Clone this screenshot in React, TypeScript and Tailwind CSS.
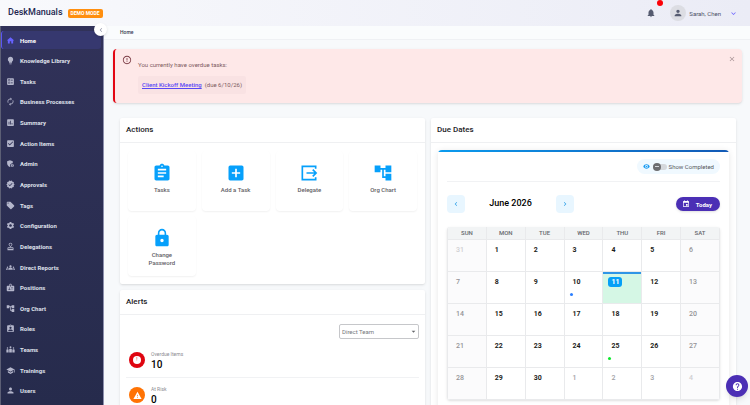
import React, { useState } from 'react'
import {
  MdAccountTree,
  MdAddBox,
  MdAdminPanelSettings,
  MdArrowDropDown,
  MdAssessment,
  MdAssignment,
  MdAssignmentInd,
  MdAutorenew,
  MdBadge,
  MdBallot,
  MdCheckBox,
  MdChevronLeft,
  MdChevronRight,
  MdClose,
  MdErrorOutline,
  MdEvent,
  MdGroups,
  MdHelp,
  MdHome,
  MdKeyboardArrowDown,
  MdLightbulb,
  MdLocalOffer,
  MdLock,
  MdNotifications,
  MdOutlineApproval,
  MdPerson,
  MdRemoveRedEye,
  MdSchool,
  MdSettings,
  MdVerified,
  MdWarning,
} from 'react-icons/md'

type Icon = React.ComponentType<{ className?: string }>

function DelegateIcon({ className }: { className?: string }) {
  return (
    <svg viewBox="0 0 24 24" fill="none" stroke="currentColor" strokeWidth="2" className={className}>
      <path d="M20 7V4H4v16h16v-3" />
      <path d="M9 12h11M16.500 8l4 4-4 4" />
    </svg>
  )
}

function TeamsIcon({ className }: { className?: string }) {
  return (
    <svg viewBox="0 0 24 24" fill="currentColor" className={className}>
      <circle cx="4" cy="8" r="2" />
      <circle cx="12" cy="6" r="2.500" />
      <circle cx="20" cy="8" r="2" />
      <path d="M1 20v-7q0-2 2-2h2q2 0 2 2v7zM8.500 20v-8q0-2 2-2h3q2 0 2 2v8zM17 20v-7q0-2 2-2h2q2 0 2 2v7z" />
    </svg>
  )
}

const NAV: { label: string; icon: Icon }[] = [
  { label: 'Home', icon: MdHome },
  { label: 'Knowledge Library', icon: MdLightbulb },
  { label: 'Tasks', icon: MdBallot },
  { label: 'Business Processes', icon: MdAutorenew },
  { label: 'Summary', icon: MdAssessment },
  { label: 'Action Items', icon: MdCheckBox },
  { label: 'Admin', icon: MdAdminPanelSettings },
  { label: 'Approvals', icon: MdVerified },
  { label: 'Tags', icon: MdLocalOffer },
  { label: 'Configuration', icon: MdSettings },
  { label: 'Delegations', icon: MdOutlineApproval },
  { label: 'Direct Reports', icon: MdGroups },
  { label: 'Positions', icon: MdBadge },
  { label: 'Org Chart', icon: MdAccountTree },
  { label: 'Roles', icon: MdAssignmentInd },
  { label: 'Teams', icon: TeamsIcon },
  { label: 'Trainings', icon: MdSchool },
  { label: 'Users', icon: MdPerson },
]

const ACTIONS: { label: string; icon: Icon }[] = [
  { label: 'Tasks', icon: MdAssignment },
  { label: 'Add a Task', icon: MdAddBox },
  { label: 'Delegate', icon: DelegateIcon },
  { label: 'Org Chart', icon: MdAccountTree },
  { label: 'Change Password', icon: MdLock },
]

const WEEKDAYS = ['SUN', 'MON', 'TUE', 'WED', 'THU', 'FRI', 'SAT']

const WEEKS = [
  [31, 1, 2, 3, 4, 5, 6],
  [7, 8, 9, 10, 11, 12, 13],
  [14, 15, 16, 17, 18, 19, 20],
  [21, 22, 23, 24, 25, 26, 27],
  [28, 29, 30, 1, 2, 3, 4],
]

const EVENTS: Record<number, string> = { 10: 'bg-blue-500', 25: 'bg-[#0be82b]' }

function Header() {
  return (
    <header className="flex h-[26px] shrink-0 items-center bg-linear-to-r from-[#f8f9fc] to-[#ebecf6] pr-3 pl-2">
      <h1 className="text-[9px] font-medium text-[#23264f]">DeskManuals</h1>
      <span className="ml-[5px] rounded-[2px] bg-[#ff8f0f] px-[3px] text-[5px] leading-[9px] font-bold text-white">
        DEMO MODE
      </span>
      <div className="ml-auto flex items-center">
        <button aria-label="Notifications" className="relative text-[#555b70]">
          <MdNotifications className="size-[10px]" />
          <span className="absolute -top-2 left-[11px] size-[6px] rounded-full bg-[#fb0007]" />
        </button>
        <button className="ml-[14px] flex items-center text-[6px] text-[#4b4f68]">
          <span className="flex size-4 items-center justify-center rounded-full bg-[#dcdde3] text-[#555b70]">
            <MdPerson className="size-[10px]" />
          </span>
          <span className="ml-[3px]">Sarah, Chen</span>
          <MdKeyboardArrowDown className="ml-2 size-[9px] text-[#6c63ff]" />
        </button>
      </div>
    </header>
  )
}

function Sidebar() {
  return (
    <aside className="relative w-[104px] shrink-0 border-r border-l border-r-[#8d90ad] border-l-[#5c5f75] bg-linear-to-b from-[#313259] to-[#262b4c]">
      <nav className="flex h-full flex-col justify-between pt-[5px] pb-[5px]">
        {NAV.map(({ label, icon: Icon }, i) => (
          <a
            key={label}
            href="#"
            className={`mr-[2px] flex h-[18px] items-center gap-[5px] border-l pl-1 text-[6px] font-bold ${
              i === 0
                ? 'rounded-[3px] border-[#5a55f5] bg-[#36386f] text-white'
                : 'border-transparent text-[#dfe0ea]'
            }`}
          >
            <Icon className={`size-[9px] ${i === 0 ? 'text-[#6762ff]' : 'text-[#b4b6cb]'}`} />
            {label}
          </a>
        ))}
      </nav>
      <button
        aria-label="Collapse menu"
        className="absolute -top-[3px] right-[-4px] z-10 flex size-[13px] items-center justify-center rounded-full bg-white text-[#8f92a5] shadow-sm"
      >
        <MdChevronLeft className="size-2" />
      </button>
    </aside>
  )
}

function OverdueBanner() {
  return (
    <div
      role="alert"
      className="mt-[9px] mr-2 ml-[9px] flex h-[54px] items-start rounded-[4px] border-l-2 border-[#e30613] bg-[#fee8e8] pt-[6px] pr-[6px] pl-[7px] shadow-sm"
    >
      <MdErrorOutline className="size-[10px] text-[#7b3b44]" />
      <div className="ml-[6px] pt-[5px] text-[6px] text-[#7d5a5e]">
        <p className="leading-[10px]">You currently have overdue tasks:</p>
        <p className="mt-[6px] rounded-[2px] bg-[#f9e2e3] px-1 leading-[18px]">
          <a href="#" className="mr-[3px] font-medium text-[#5a48f5] underline">
            Client Kickoff Meeting
          </a>
          (due 6/10/26)
        </p>
      </div>
      <button aria-label="Dismiss" className="ml-auto text-[#a89496]">
        <MdClose className="size-2" />
      </button>
    </div>
  )
}

function Card({ title, children }: { title: string; children: React.ReactNode }) {
  return (
    <section className="rounded-[2px] bg-white shadow-sm">
      <h2 className="border-b border-[#eff0f2] px-[6px] text-[8px] leading-6 font-medium text-[#1c1c1f]">{title}</h2>
      {children}
    </section>
  )
}

function AlertRow({ label, value, color, children }: { label: string; value: number; color: string; children: React.ReactNode }) {
  return (
    <div className="flex h-[35px] items-center gap-[6px] border-b border-[#f1f2f4] px-[3px]">
      <span className={`flex size-4 items-center justify-center rounded-full ${color}`}>{children}</span>
      <div>
        <div className="text-[5px] leading-[8px] text-[#8b8b90]">{label}</div>
        <div className="text-[10px] leading-[13px] font-medium text-black">{value}</div>
      </div>
    </div>
  )
}

function DayCell({ day, col, week }: { day: number; col: number; week: number }) {
  const outside = (week === 0 && day > 20) || (week === 4 && day < 20)
  const weekend = col === 0 || col === 6
  const today = day === 11
  const tone = outside ? (weekend ? 'text-[#cfcfd2]' : 'text-[#a0a0a4]') : weekend ? 'text-[#939397]' : 'text-[#1d1d20]'
  return (
    <td
      className={`h-8 border-r border-b border-[#e9eaec] p-0 align-top ${
        today ? 'bg-[#d5f7e5]' : weekend ? 'bg-[#fbfbfc]' : ''
      }`}
    >
      <div className={`relative h-[31px] pl-[5px] ${today ? 'border-t-2 border-[#2f95e6] pt-[3px]' : 'pt-[5px]'}`}>
        <span
          className={`block w-fit rounded-[3px] px-[3px] text-[7px] leading-[10px] ${
            outside || weekend ? 'font-medium' : 'font-bold'
          } ${today ? 'bg-[#06a0f7] text-white' : tone}`}
        >
          {day}
        </span>
        {!outside && EVENTS[day] && (
          <span className={`absolute bottom-[7px] left-[5px] size-[3px] rounded-full ${EVENTS[day]}`} />
        )}
      </div>
    </td>
  )
}

function DueDates() {
  const [showCompleted, setShowCompleted] = useState(false)

  return (
    <Card title="Due Dates">
      <div className="m-[7px] overflow-hidden rounded-[4px] shadow-[0_1px_6px_rgba(0,0,0,0.1)]">
        <div className="h-[2px] bg-linear-to-r from-[#0b9bee] to-[#1259b5]" />
        <div className="px-[9px] pb-4">
          <div className="flex justify-end border-b border-[#f1f2f4] pt-[7px] pb-[7px]">
            <label className="flex h-[15px] items-center rounded-full bg-[#f0f9ff] px-[6px] text-[6px] text-[#56585e]">
              <MdRemoveRedEye className="size-[7px] text-[#1b9cf2]" />
              <input
                type="checkbox"
                checked={showCompleted}
                onChange={(e) => setShowCompleted(e.target.checked)}
                className="peer sr-only"
              />
              <span className="ml-[3px] flex h-[6px] w-[14px] items-center rounded-full bg-[#d5d8dc] peer-checked:justify-end">
                <span className="flex size-2 shrink-0 items-center justify-center rounded-full bg-[#6d6d70]">
                  <span className="h-px w-1 bg-[#d5d8dc]" />
                </span>
              </span>
              <span className="ml-[2px]">Show Completed</span>
            </label>
          </div>

          <div className="flex items-center justify-between pt-[13px] pb-[14px]">
            <div className="flex w-[127px] items-center justify-between">
              <button aria-label="Previous month" className="flex size-[18px] items-center justify-center rounded-[4px] bg-[#e8f6ff] text-[#2d9fe8]">
                <MdChevronLeft className="size-2" />
              </button>
              <h3 className="text-[9px] font-medium text-black">June 2026</h3>
              <button aria-label="Next month" className="flex size-[18px] items-center justify-center rounded-[4px] bg-[#e8f6ff] text-[#2d9fe8]">
                <MdChevronRight className="size-2" />
              </button>
            </div>
            <button className="flex h-[14px] items-center gap-[6px] rounded-full bg-[#4b2fb5] pr-2 pl-[6px] text-[6px] font-bold text-white shadow-sm">
              <MdEvent className="size-2" />
              Today
            </button>
          </div>

          <table className="w-full table-fixed border-separate border-spacing-0 overflow-hidden rounded-[3px] border-l border-[#e9eaec] shadow-sm">
            <thead>
              <tr>
                {WEEKDAYS.map((d) => (
                  <th key={d} className="border-r border-b border-[#e9eaec] bg-[#f2f4f5] p-0 text-[6px] leading-[12px] font-medium text-[#66686d]">
                    {d}
                  </th>
                ))}
              </tr>
            </thead>
            <tbody>
              {WEEKS.map((days, week) => (
                <tr key={week}>
                  {days.map((day, col) => (
                    <DayCell key={col} day={day} col={col} week={week} />
                  ))}
                </tr>
              ))}
            </tbody>
          </table>
        </div>
      </div>
    </Card>
  )
}

export default function App() {
  return (
    <div className="flex h-screen flex-col overflow-hidden bg-[#f7f9fb] font-['Roboto',sans-serif]">
      <Header />
      <div className="flex min-h-0 flex-1">
        <Sidebar />
        <main className="min-w-0 flex-1 overflow-hidden">
          <div className="border-b border-[#eff1f4] bg-[#fafcfd] pl-4 text-[5px] leading-[13px] font-medium text-[#33364f]">
            Home
          </div>
          <OverdueBanner />

          <div className="mt-[15px] grid grid-cols-2 items-start gap-[6px] pr-[14px] pl-4">
            <div className="grid gap-[6px]">
              {/* Quick actions */}
              <Card title="Actions">
                <div className="grid grid-cols-4 gap-x-[6px] gap-y-[5px] p-2">
                  {ACTIONS.map(({ label, icon: Icon }) => (
                    <button
                      key={label}
                      className="flex h-[60px] flex-col items-center rounded-[4px] px-3 pt-3 text-[6px] leading-[8px] font-medium text-[#5f6065] shadow-[0_1px_2px_rgba(0,0,0,0.06)]"
                    >
                      <Icon className="mb-[3px] size-5 shrink-0 text-[#06a0fb]" />
                      {label}
                    </button>
                  ))}
                </div>
              </Card>

              {/* Team alerts */}
              <Card title="Alerts">
                <div className="px-[6px] pt-[9px]">
                  <div className="relative ml-auto w-20">
                    <select
                      aria-label="Team scope"
                      className="block h-[15px] w-full appearance-none rounded-[2px] border border-[#c6c7ca] bg-white px-[2px] text-[6px] text-[#77787d]"
                    >
                      <option>Direct Team</option>
                    </select>
                    <MdArrowDropDown className="pointer-events-none absolute top-[3px] right-[1px] size-[9px] text-[#66676b]" />
                  </div>
                  <div className="pt-1">
                    <AlertRow label="Overdue Items" value={10} color="bg-[#df0510]">
                      <span className="flex size-2 items-center justify-center rounded-full bg-white text-[5px] text-[#df0510]">
                        !
                      </span>
                    </AlertRow>
                    <AlertRow label="At Risk" value={0} color="bg-[#ff7304]">
                      <MdWarning className="size-[9px] text-white" />
                    </AlertRow>
                  </div>
                </div>
              </Card>
            </div>

            <DueDates />
          </div>
        </main>
      </div>

      <button
        aria-label="Help"
        className="fixed right-[2px] bottom-2 flex size-[22px] items-center justify-center rounded-full bg-[#4b2fb5] text-white shadow-md"
      >
        <MdHelp className="size-[11px]" />
      </button>
    </div>
  )
}
